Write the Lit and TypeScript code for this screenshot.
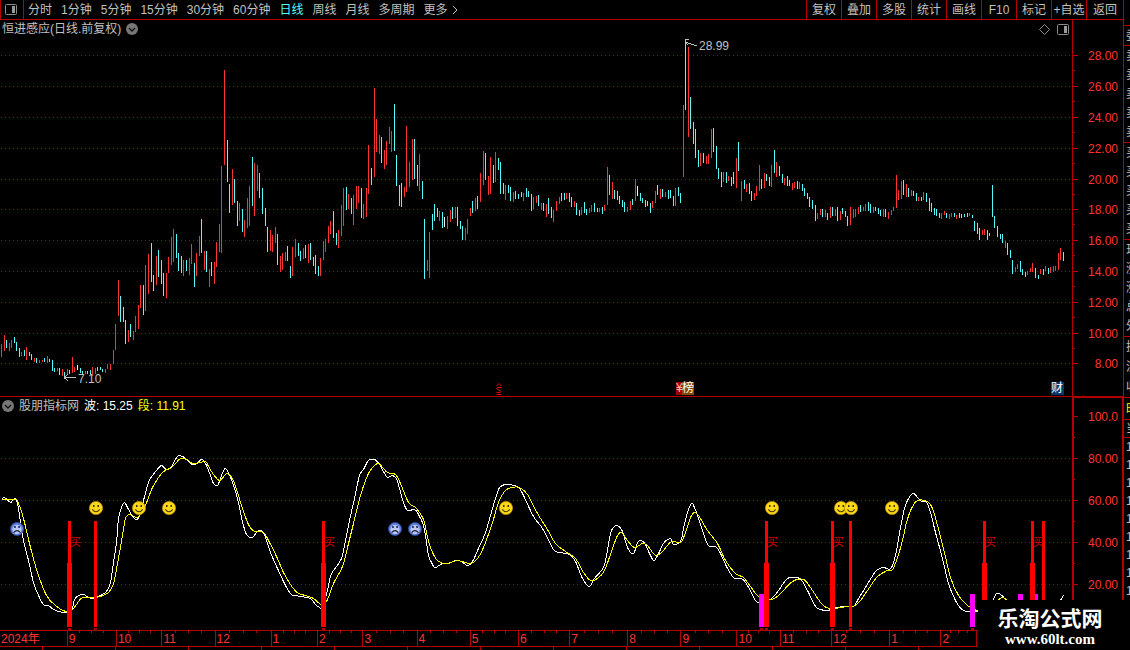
import { LitElement, html, svg, css } from "lit";
import { customElement, property, state } from "lit/decorators.js";
import { classMap } from "lit/directives/class-map.js";

const PLOT_WIDTH = 1072;

// Each bar: x, tone (r = up, c = down, w = flat), top and bottom.
const BARS = `
1r344-357 4r335-351 6c340-348 9r343-351 11r340-348 14c337-343 16c342-351 19c348-357 21r352-356 24c350-356
26r347-360 29c352-356 31c354-360 34r358-362 36c358-363 39r360-363 42r360-362 44c358-362 47r356-363 49c359-362
52c360-371 54c368-372 57r368-371 59c368-375 62r369-376 64c372-378 67r369-374 69c370-374 72r357-373 74r367-372
77w365-370 80c368-373 82c371-374 85r371-374 87c371-374 90c370-375 92r367-376 95r368-374 97c367-371 100c367-370
102c369-372 105r369-373 107r364-369 110r364-370 113r350-364 115r324-350 118r280-316 120c296-322 123c307-322 125c320-344
128r330-342 130c324-337 133r331-340 135r316-332 138r305-329 140r285-308 143c285-315 145r265-311 148r254-294 151c243-282
153c275-291 156r256-285 158c250-277 161c260-284 163c273-296 166r273-298 168r257-273 171r237-265 173r229-262 176c234-258
178c253-271 181c256-273 183r260-276 186c260-271 189r258-275 191r244-264 194c263-287 196r253-276 199r236-256 201c219-253
204r251-270 206c251-272 209r269-287 211c262-276 214r262-284 216r242-267 219r224-252 221r166-253 224r70-165 227c140-182
229c184-213 232r169-205 234c179-203 237c201-226 239r203-221 242c209-232 244r220-237 247r198-228 249r186-226 252c157-206
254r163-216 257r165-191 259c173-198 262c188-214 265c208-226 267c227-252 270r230-251 272r235-252 275r227-243 277c234-265
280r256-272 282r253-270 285r252-261 287c246-261 290c266-278 292r247-276 295r239-257 298c243-256 300c251-261 303r248-259
305c245-258 308r244-263 310c243-260 313c257-266 315c255-274 318c266-276 320r258-276 323r241-260 325r239-252 328r226-243
330r221-234 333c211-238 336c233-245 338r230-248 341r205-236 343r188-226 346c187-210 348r194-209 351c198-214 353r195-225
356r186-209 358r186-203 361c188-218 363r204-219 366r188-217 368r145-194 371c168-185 374r88-177 376r119-152 379r135-154
381c137-163 384r150-169 386r141-165 389r127-144 391r131-152 394c104-151 396c155-186 399c185-206 401c183-207 404r187-197
406r126-192 409r162-187 412r139-180 414c139-179 417c165-186 419r154-191 422c181-199 424c219-279 427r260-271 429r232-278
432c214-230 434c204-221 437c208-217 439r211-221 442c212-228 444w217-227 447r216-229 450r210-222 452c207-219 455r207-218
457c207-226 460c221-229 462c226-240 465r228-240 467r219-234 470r208-216 472c201-213 475r198-211 477c196-209 480r173-202
483r151-185 485c153-180 488r176-195 490r157-194 493c165-183 495r152-182 498c158-170 500c162-194 503c183-194 505r185-200
508c185-193 510c187-201 513r192-202 515c191-199 518c194-199 521c192-197 523r193-201 526c188-197 528c191-197 531c194-211
533r197-209 536r196-203 538c195-206 541r203-210 543c203-211 546r204-217 548c198-214 551c207-218 553r210-222 556r201-211
559r197-204 561c193-201 564c193-200 566r193-199 569c193-202 571c197-207 574r201-207 576c203-215 579c210-216 581r207-215
584c202-213 586c209-215 589r208-213 591r205-212 594c203-212 597c208-212 599r208-212 602c207-214 604r205-211 607r167-205
609c175-195 612r182-199 614c190-199 617c191-200 619c196-204 622c200-207 624c202-212 627r207-212 630r201-210 632c199-205
635r179-201 637w186-196 640c193-201 642c198-203 645c200-207 647c201-206 650c203-213 652r201-208 655r191-203 657c185-195
660r189-199 662c189-197 665r192-197 668c190-199 670c190-198 673c196-206 675r188-206 678c187-196 680c193-203 683r105-177
685c42-110 688r47-137 690c97-129 693c122-144 695c129-158 698c150-167 700r153-166 703c153-163 706r156-164 708r154-164
711r129-158 713c128-152 716c146-169 718c168-179 721c172-187 723r172-182 726c172-183 728r176-181 731c177-186 733c172-184
736r158-188 738c142-171 741r181-201 744c180-189 746r184-192 749c183-194 751c191-201 754r193-200 756r186-196 759r165-191
761c179-189 764r173-188 766c174-181 769c177-186 771r165-187 774c150-173 776r162-177 779c166-176 782c174-183 784r178-185
787c176-186 789c180-186 792r183-190 794r182-188 797c181-189 799r182-189 802c184-191 804c188-196 807c193-199 809c197-207
812c200-209 815c205-221 817r213-219 820r209-215 822c209-217 825r210-217 827c213-220 830r207-218 832c207-216 835r209-216
837c207-221 840r211-220 842c208-214 845c211-217 847c216-226 850r207-225 853r209-218 855r209-217 858r207-214 860c205-212
863r207-211 865r204-211 868c202-211 870c204-213 873r207-213 875c207-211 878c208-214 880c210-216 883r209-217 885c209-217
888r212-219 891r210-215 893r207-211 896r175-208 898r190-200 901r181-199 903c180-195 906r184-197 908c188-197 911r190-196
913c191-196 916c193-201 918r197-201 921c197-201 923r192-200 926c193-202 929c198-211 931c203-212 934c208-215 936c209-216
939c213-218 941r213-219 944r211-215 946c213-218 949r214-219 951r213-217 954c213-217 956r215-219 959c213-218 961c214-218
964c214-217 967c213-217 969r213-216 972c215-218 974c221-231 977c223-234 979c228-240 982r230-235 984r229-235 987c230-240
989c233-236 992c185-217 994c216-228 997c226-237 1000c234-239 1002c234-243 1005r241-248 1007c243-255 1010c250-258 1012c260-274
1015r267-272 1017r264-269 1020c261-272 1022c269-275 1025c272-277 1027r271-275 1030r268-272 1032r263-272 1035c268-278 1038c275-279
1040r269-274 1043c269-275 1045r266-271 1048c268-274 1050r267-273 1053r266-272 1055r266-271 1058r253-270 1060r248-260 1063c252-261`
  .trim()
  .split(/\s+/)
  .map((entry) => {
    const [, x, tone, top, bottom] = entry.match(/^(\d+)([rcw])(\d+)-(\d+)$/)!;
    return { x: +x, tone, top: +top, bottom: +bottom };
  });

const barPath = (tone: string) =>
  BARS.filter((b) => b.tone === tone)
    .map((b) => `M${b.x + 0.5} ${b.top}V${b.bottom}`)
    .join("");

const WAVE = [
  `1,103 4,100 10,105 14,101 17,106 20,125 23,143 28,163 33,185 38,198 43,207 48,208 53,212 63,215 71,213 74,202 78,198 83,197 88,200
  93,201 100,198 106,194 110,185 113,165 116,145 118,121 121,110 124,105 127,110 131,117 136,122 140,116 143,103 148,85 152,78 156,73
  161,68 166,72 171,69 177,59 182,59 185,61 190,66 195,67 201,62 205,66 210,78 213,86 217,88 220,81 223,73 225,71 228,75 232,85 237,101
  241,120 245,135 248,139 252,140 257,134 262,134 265,140 270,155 277,171 285,188 291,197 295,198 300,199 310,201 315,207 319,210
  322,210 326,197 330,179 333,173 341,161 345,143 349,123 354,101 359,78 363,72 368,63 374,62 379,67 386,79 390,79 392,78 396,81
  399,91 403,105 407,113 414,112 418,117 423,128 426,145 428,158 432,167 435,170 442,166 447,166 456,163 461,164 467,168 472,164
  478,151 485,135 492,111 497,95 500,89 508,87 518,90 523,98 533,119 542,131 553,152 560,155 569,157 575,164 582,181 589,189 594,181
  603,170 606,158 610,136 613,130 617,128 622,134 627,150 633,156 637,145 641,143 645,147 649,156 653,163 656,160 663,146 667,142
  671,142 673,147 680,144 683,131 687,115 691,106 694,110 698,121 703,136 708,148 715,149 720,156 727,171 734,181 741,181 747,188
  755,203 759,205 770,202 778,193 787,181 797,180 802,184 808,195 816,210 827,213 832,211 843,209 853,209 858,201 865,190 871,180
  876,173 883,170 889,172 892,168 896,153 900,130 904,111 908,101 913,96 917,100 921,104 926,105 930,115 935,135 942,161 948,186
  955,203 963,213 978,214`,
  `992,204 996,196 1000,197 1004,200`,
  `1060,203 1063,198`,
];

const SEGMENT = [
  `1,102 15,102 18,106 23,121 30,150 37,175 46,198 55,208 65,214 71,213 76,207 82,200 93,200 100,199 108,195 113,186 117,166 122,138
  125,121 129,117 137,120 142,113 147,103 152,90 162,75 171,70 180,61 186,62 193,66 205,64 208,69 213,77 219,83 224,78 227,76 232,81
  237,95 242,111 248,127 254,134 263,135 268,143 277,161 283,175 292,190 298,196 305,198 313,201 322,208 327,202 333,186 342,169
  348,146 353,126 360,98 368,76 377,66 382,70 387,75 395,77 400,86 408,105 415,110 423,122 427,140 432,155 438,164 447,166 457,163
  470,166 477,161 483,150 492,125 498,105 505,93 512,90 519,90 527,97 537,116 547,132 555,146 565,154 575,161 583,175 590,183
  597,181 604,173 612,151 617,138 621,135 627,143 634,150 642,146 647,148 655,158 662,154 671,144 680,145 685,135 690,120 694,115
  698,118 707,133 717,146 725,163 735,176 743,180 750,189 758,199 770,202 778,198 792,184 803,182 810,190 821,206 830,211 847,209
  853,209 860,203 867,193 877,179 887,173 892,172 897,160 902,143 906,125 911,111 917,103 927,104 932,111 937,128 944,155 950,180
  958,198 967,208 978,214`,
  `997,203 1002,200 1007,203`,
];

// Smooth path through the points: each inner tangent follows its neighbours.
const curve = (list: string) => {
  const p = list.trim().split(/\s+/).map((pair) => pair.split(",").map(Number));
  const at = (i: number) => p[Math.max(0, Math.min(p.length - 1, i))];
  let d = `M${p[0][0] + 0.5} ${p[0][1] + 0.5}`;
  for (let i = 0; i < p.length - 1; i++) {
    const [a, b, c, e] = [at(i - 1), at(i), at(i + 1), at(i + 2)];
    const out = [b[0] + (c[0] - a[0]) / 6, b[1] + (c[1] - a[1]) / 6];
    const into = [c[0] - (e[0] - b[0]) / 6, c[1] - (e[1] - b[1]) / 6];
    d += `C${[...out, ...into, ...c].map((v) => (v + 0.5).toFixed(2)).join(" ")}`;
  }
  return d;
};

const PRICE_TICKS: [number, string][] = [
  [55, "28.00"], [86, "26.00"], [117, "24.00"], [148, "22.00"], [179, "20.00"], [209, "18.00"],
  [240, "16.00"], [271, "14.00"], [302, "12.00"], [333, "10.00"], [363, "8.00"],
];
const WAVE_TICKS: [number, string][] = [
  [19, "100.0"], [61, "80.00"], [103, "60.00"], [145, "40.00"], [187, "20.00"],
];

// Month label and its share of the time axis.
const MONTHS: [string, number][] = [
  ["2024年", 68], ["9", 49], ["10", 45], ["11", 53], ["12", 56], ["1", 46], ["2", 45], ["3", 54], ["4", 53],
  ["5", 48], ["6", 51], ["7", 58], ["8", 53], ["9", 56], ["10", 43], ["11", 51], ["12", 58], ["1", 51],
  ["2", 35], ["3", 150],
];

const STRONG_SIGNALS = [67, 321, 764, 830, 982, 1030];
const WEAK_SIGNALS = [94, 849, 1042];
const SELL_SIGNALS = [759, 970, 1018, 1033];
const SMILES = [96, 139, 169, 506, 772, 841, 851, 892];
const FROWNS = [17, 395, 415];

const PERIODS = ["分时", "1分钟", "5分钟", "15分钟", "30分钟", "60分钟", "日线", "周线", "月线", "多周期"];
const TOOLS = ["复权", "叠加", "多股", "统计", "画线", "F10", "标记", "+自选", "返回"];

const percent = (x: number) => `${(x / PLOT_WIDTH) * 100}%`;

const panelIcon = html`<svg class="icon" width="12" height="11" viewBox="0 0 12 11" aria-hidden="true">
  <rect x=".5" y=".5" width="11" height="10" rx="1" fill="none" stroke="#8c8c8c" />
  <rect x="7" y="2" width="3" height="7" fill="#9a9a9a" />
</svg>`;

const chevronIcon = html`<svg class="icon" width="12" height="12" viewBox="0 0 12 12" aria-hidden="true">
  <circle cx="6" cy="6" r="6" fill="#777" />
  <path d="M3 5l3 3 3-3" fill="none" stroke="#111" stroke-width="1.3" />
</svg>`;

const smile = html`<svg class="icon" width="14" height="14" viewBox="0 0 14 14" aria-hidden="true">
  <circle cx="7" cy="7" r="6.6" fill="#fcd916" stroke="#b88a10" stroke-width=".8" />
  <rect x="4" y="4" width="1.5" height="2" fill="#3d3200" /><rect x="8.5" y="4" width="1.5" height="2" fill="#3d3200" />
  <path d="M3.3 8.3Q7 13.3 10.7 8.3" fill="none" stroke="#4d3d00" stroke-width="1.1" />
</svg>`;

const frown = html`<svg class="icon" width="14" height="14" viewBox="0 0 14 14" aria-hidden="true">
  <circle cx="7" cy="7" r="6.5" fill="#6484dc" stroke="#2d4595" />
  <ellipse cx="7" cy="7.5" rx="4.5" ry="4.6" fill="#bac8f7" />
  <rect x="4.2" y="4" width="1.5" height="2" fill="#15204d" /><rect x="8.3" y="4" width="1.5" height="2" fill="#15204d" />
  <path d="M3.6 10.6Q7 6.6 10.4 10.6" fill="none" stroke="#241c30" stroke-width="1.1" />
</svg>`;

const shared = css`
  * { box-sizing: border-box; }
  button {
    font: inherit; color: inherit; background: none; border: 0; padding: 0; margin: 0;
    cursor: pointer; white-space: nowrap;
  }
  .icon { display: block; flex: none; }
`;

@customElement("value-axis")
class ValueAxis extends LitElement {
  @property({ attribute: false }) ticks: [number, string][] = [];
  @property({ type: Number }) height = 0;
  @property({ type: Number }) top = 0;
  @property({ type: Boolean, reflect: true }) selected = false;

  static styles = css`
    :host { display: block; width: 51px; flex: none; box-sizing: border-box; border-left: 1px solid #b40000; overflow: hidden; }
    :host([selected]) { border: 2px solid #b40000; border-bottom: 0; border-top-width: 1px; border-right-width: 1px; }
    .scale { display: block; }
    .mark { stroke: #b40000; shape-rendering: crispEdges; }
    .label { fill: #ff3232; font: 12px "Liberation Sans", sans-serif; text-anchor: end; }
  `;

  render() {
    const left = this.selected ? 1 : 0;
    return html`<svg class="scale" width="50" height=${this.height} viewBox="${left} ${this.top} 50 ${this.height}">
      ${this.ticks.map(([y, label], i) => {
        const next = this.ticks[i + 1];
        const mid = next ? Math.floor((y + next[0]) / 2) : 0;
        return svg`
          <path class="mark" d="M0 ${y + 0.5}h5"></path>
          ${next ? svg`<path class="mark" d="M0 ${mid + 0.5}h2"></path>` : ""}
          <text class="label" x="45" y=${y + 5}>${label}</text>`;
      })}
    </svg>`;
  }
}

@customElement("price-plot")
class PricePlot extends LitElement {
  static styles = [shared, css`
    :host { display: block; position: relative; height: 358px; }
    .canvas { display: block; width: 100%; height: 358px; }
    .grid { stroke: #a80000; stroke-dasharray: 1 3; fill: none; }
    .r { stroke: #ff3232; } .c { stroke: #54fcfc; } .w { stroke: #fff; }
    .note { position: absolute; display: flex; align-items: center; gap: 2px; height: 14px; line-height: 14px; color: #c0c0c0; }
    .peak { top: 1px; } .low { top: 334px; }
    .flag { position: absolute; top: 344px; height: 13px; line-height: 13px; color: #fff; display: flex; }
    .report { background: #003a6e; width: 13px; }
    .yen { background: #a00000; color: #ffb0a0; width: 6px; overflow: hidden; }
    .rank { background: #8a4500; width: 12px; }
    .arrow { display: block; }
  `];

  render() {
    return html`
      <svg class="canvas" viewBox="0 38 ${PLOT_WIDTH} 358" preserveAspectRatio="none" shape-rendering="crispEdges">
        ${PRICE_TICKS.map(([y]) => svg`<path class="grid" d="M1 ${y + 0.5}H${PLOT_WIDTH}"></path>`)}
        ${["r", "c", "w"].map((tone) => svg`<path class=${tone} d=${barPath(tone)}></path>`)}
      </svg>
      <span class="note peak" style="left:${percent(685)}">
        <svg class="arrow" width="12" height="14" viewBox="0 0 12 14" fill="none" stroke="#c0c0c0" shape-rendering="crispEdges">
          <path d="M0 3l12 4M4 0.5H1L0 3l3 3" />
        </svg>28.99</span>
      <span class="note low" style="left:${percent(64)}">
        <svg class="arrow" width="12" height="14" viewBox="0 0 12 14" fill="none" stroke="#c0c0c0" shape-rendering="crispEdges">
          <path d="M0 5.5h12M4 2.5L0 5.5l4 3" />
        </svg>7.10</span>
      <span class="flag" style="left:${percent(495)}">
        <svg class="arrow" width="8" height="13" viewBox="0 0 8 13" fill="none" stroke="#f00000">
          <path d="M1.500 4L4 1.500 6.500 4M6.500 5.500H2.500L1.500 6.500 6 9.500 5 10.500H1.500M1.500 12.500h5" />
        </svg></span>
      <span class="flag" style="left:${percent(676)}"><span class="yen">¥</span><span class="rank">榜</span></span>
      <span class="flag report" style="left:${percent(1051)}">财</span>`;
  }
}

@customElement("wave-plot")
class WavePlot extends LitElement {
  static styles = [shared, css`
    :host { display: block; position: relative; height: 215px; }
    .canvas { display: block; width: 100%; height: 215px; }
    .grid { stroke: #a80000; stroke-dasharray: 1 3; fill: none; }
    .wave { stroke: #fff; fill: none; }
    .segment { stroke: #ff0; fill: none; }
    .buy { fill: #f00; } .sell { fill: #f0f; } .foot { fill: #b40000; }
    .face { position: absolute; width: 14px; height: 14px; margin-left: -7px; }
    .smile { top: 86px; } .frown { top: 107px; }
    .tag { position: absolute; top: 120px; height: 14px; line-height: 14px; font-size: 11px; color: #d00000; }
  `];

  render() {
    return html`
      <svg class="canvas" viewBox="0 18 ${PLOT_WIDTH} 215" preserveAspectRatio="none" shape-rendering="crispEdges">
        ${WAVE_TICKS.slice(1).map(([y]) => svg`<path class="grid" d="M1 ${y + 0.5}H${PLOT_WIDTH}"></path>`)}
        ${WAVE.map((points) => svg`<path class="wave" d=${curve(points)}></path>`)}
        ${SEGMENT.map((points) => svg`<path class="segment" d=${curve(points)}></path>`)}
        ${SELL_SIGNALS.map((x) => svg`<rect class="sell" x=${x} y="197" width="5" height="33"></rect>
          <rect class="foot" x=${x + 1} y="231" width="3" height="2"></rect>`)}
        ${STRONG_SIGNALS.map((x) => svg`<rect class="buy" x=${x + 1} y="124" width="3" height="42"></rect>
          <rect class="buy" x=${x} y="166" width="5" height="64"></rect>
          <rect class="foot" x=${x + 1} y="231" width="3" height="2"></rect>`)}
        ${WEAK_SIGNALS.map((x) => svg`<rect class="buy" x=${x} y="124" width="3" height="106"></rect>
          <rect class="foot" x=${x} y="231" width="3" height="2"></rect>`)}
      </svg>
      ${STRONG_SIGNALS.map((x) => html`<span class="tag" style="left:${percent(x + 3)}">买</span>`)}
      ${SMILES.map((x) => html`<span class="face smile" style="left:${percent(x)}">${smile}</span>`)}
      ${FROWNS.map((x) => html`<span class="face frown" style="left:${percent(x)}">${frown}</span>`)}`;
  }
}

@customElement("quote-strip")
class QuoteStrip extends LitElement {
  static styles = [shared, css`
    :host { display: block; width: 7px; flex: none; box-sizing: border-box; overflow: hidden; border-left: 1px solid #b40000; color: #c0c0c0; padding-top: 25px; }
    .group { display: flex; flex-direction: column; justify-content: space-around; border-top: 1px solid #b40000; padding-left: 2px; line-height: 18px; }
    .single { height: 20px; }
    .five { height: 97px; }
    .three { height: 61px; }
    .tab { height: 22px; color: #ff0; }
    .head { height: 18px; }
  `];

  render() {
    const group = (kind: string, rows: string[]) => html`<div class="group ${kind}">${rows.map((row) => html`<span>${row}</span>`)}</div>`;
    return html`
      ${group("single", ["委"])}
      ${group("five", Array(5).fill("卖"))}
      ${group("five", Array(5).fill("买"))}
      ${group("five", ["现", "涨", "涨", "总", "外"])}
      ${group("three", ["换", "流", "收"])}
      ${group("tab", ["时"])}
      ${group("head", ["当"])}
      ${group("times", Array(9).fill("1"))}`;
  }
}

@customElement("app-root")
class AppRoot extends LitElement {
  @state() private period = "日线";

  static styles = [shared, css`
    :host {
      display: flex; position: relative; min-height: 100vh; overflow: hidden; background: #000; color: #c0c0c0;
      font: 12px/18px "Liberation Sans", "Noto Sans CJK SC", sans-serif;
    }
    .desk { flex: 1; min-width: 0; display: flex; flex-direction: column; }
    .toolbar { display: flex; justify-content: space-between; height: 20px; border-bottom: 1px solid #b40000; border-left: 1px solid #b40000; }
    .toggle { width: 23px; padding-left: 4px; border-right: 1px solid #b40000; }
    .periods { display: flex; gap: 9px; }
    .toggle + .period { margin-left: -5px; }
    .active { color: #54fcfc; }
    .more { display: flex; align-items: center; gap: 3px; }
    .tools { display: flex; }
    .tool { min-width: 35px; border-left: 1px solid #b40000; text-align: center; }
    .tool:last-child { min-width: 37px; }
    .panel { display: flex; }
    .price { border-bottom: 1px solid #b40000; }
    .body { flex: 1; min-width: 0; }
    .head { display: flex; align-items: center; height: 18px; padding: 0 3px 0 2px; gap: 5px; }
    .spacer { flex: 1; }
    .extras { display: flex; align-items: center; gap: 7px; }
    .wave-value { color: #fff; }
    .segment-value { color: #ff0; }
    .months { display: flex; height: 17px; border-top: 1px solid #b40000; border-bottom: 1px solid #b40000; color: #ff3232; line-height: 16px; }
    .month { min-width: 0; padding-left: 1px; overflow: hidden; white-space: nowrap; }
    .month + .month {
      border-left: 1px solid #b40000;
      background: linear-gradient(#b40000, #b40000) 25% 0 / 1px 2px no-repeat,
        linear-gradient(#b40000, #b40000) 50% 0 / 1px 2px no-repeat,
        linear-gradient(#b40000, #b40000) 75% 0 / 1px 2px no-repeat;
    }
    .ruler { flex: 1; min-height: 3px; background: repeating-linear-gradient(90deg, transparent 0 42px, #b40000 42px 43px, transparent 43px 73px); }
    .brand {
      position: absolute; right: 0; bottom: 0; width: 152px; height: 50px; padding: 7px 8px 0 0; background: #000; color: #fff;
      display: flex; flex-direction: column; align-items: center; text-align: center; text-decoration: none; font-weight: bold;
    }
    .brand-name { font-size: 21px; line-height: 24px; }
    .brand-site { font-family: "Liberation Serif", serif; font-size: 15px; line-height: 16px; }
  `];

  render() {
    return html`
      <main class="desk">
        <header class="toolbar">
          <nav class="periods" aria-label="周期">
            <button class="toggle" aria-label="侧栏">${panelIcon}</button>
            ${PERIODS.map((name) => html`<button
              class=${classMap({ period: true, active: name === this.period })}
              @click=${() => (this.period = name)}>${name}</button>`)}
            <button class="more">更多
              <svg class="icon" width="8" height="10" viewBox="0 0 8 10" fill="none" stroke="#c0c0c0"><path d="M2 1l4 4-4 4" /></svg>
            </button>
          </nav>
          <div class="tools">${TOOLS.map((name) => html`<button class="tool">${name}</button>`)}</div>
        </header>

        <section class="panel price">
          <div class="body">
            <div class="head">
              <span>恒进感应(日线.前复权)</span>${chevronIcon}
              <span class="spacer"></span>
              <span class="extras">
                <svg class="icon" width="11" height="11" viewBox="0 0 11 11" fill="none" stroke="#8c8c8c"><path d="M5.500 .5l5 5-5 5-5-5z" /></svg>
                ${panelIcon}
              </span>
            </div>
            <price-plot></price-plot>
          </div>
          <value-axis .ticks=${PRICE_TICKS} .top=${20} .height=${376}></value-axis>
        </section>

        <section class="panel">
          <div class="body">
            <div class="head">
              ${chevronIcon}<span>股朋指标网</span>
              <span class="wave-value">波: 15.25</span>
              <span class="segment-value">段: 11.91</span>
            </div>
            <wave-plot></wave-plot>
          </div>
          <value-axis selected .ticks=${WAVE_TICKS} .top=${1} .height=${232}></value-axis>
        </section>

        <div class="months">
          ${MONTHS.map(([label, share]) => html`<span class="month" style="flex:${share} ${share} 0">${label}</span>`)}
        </div>
        <div class="ruler"></div>
      </main>
      <quote-strip></quote-strip>
      <a class="brand" href="#"><span class="brand-name">乐淘公式网</span><span class="brand-site">www.60lt.com</span></a>`;
  }
}
